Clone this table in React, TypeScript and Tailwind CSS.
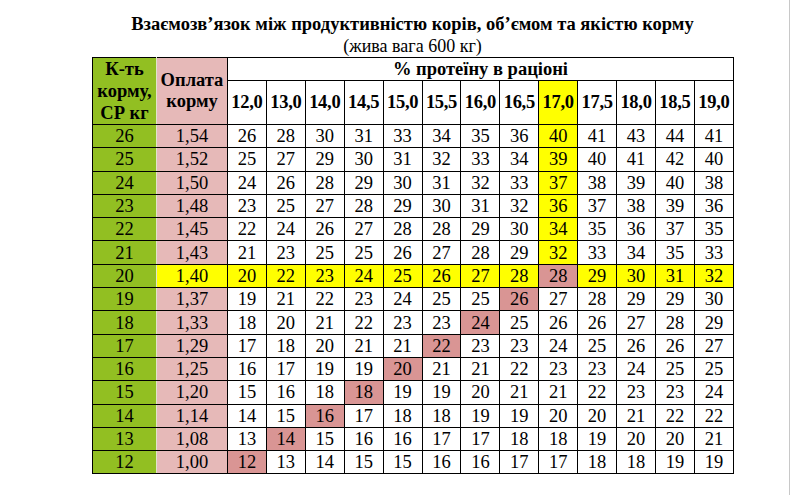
const proteins = ["12,0", "13,0", "14,0", "14,5", "15,0", "15,5", "16,0", "16,5", "17,0", "17,5", "18,0", "18,5", "19,0"];

// [к-ть корму, оплата корму, значення по колонках]
const rows: [string, string, number[]][] = [
  ["26", "1,54", [26, 28, 30, 31, 33, 34, 35, 36, 40, 41, 43, 44, 41]],
  ["25", "1,52", [25, 27, 29, 30, 31, 32, 33, 34, 39, 40, 41, 42, 40]],
  ["24", "1,50", [24, 26, 28, 29, 30, 31, 32, 33, 37, 38, 39, 40, 38]],
  ["23", "1,48", [23, 25, 27, 28, 29, 30, 31, 32, 36, 37, 38, 39, 36]],
  ["22", "1,45", [22, 24, 26, 27, 28, 28, 29, 30, 34, 35, 36, 37, 35]],
  ["21", "1,43", [21, 23, 25, 25, 26, 27, 28, 29, 32, 33, 34, 35, 33]],
  ["20", "1,40", [20, 22, 23, 24, 25, 26, 27, 28, 28, 29, 30, 31, 32]],
  ["19", "1,37", [19, 21, 22, 23, 24, 25, 25, 26, 27, 28, 29, 29, 30]],
  ["18", "1,33", [18, 20, 21, 22, 23, 23, 24, 25, 26, 26, 27, 28, 29]],
  ["17", "1,29", [17, 18, 20, 21, 21, 22, 23, 23, 24, 25, 26, 26, 27]],
  ["16", "1,25", [16, 17, 19, 19, 20, 21, 21, 22, 23, 23, 24, 25, 25]],
  ["15", "1,20", [15, 16, 18, 18, 19, 19, 20, 21, 21, 22, 23, 23, 24]],
  ["14", "1,14", [14, 15, 16, 17, 18, 18, 19, 19, 20, 20, 21, 22, 22]],
  ["13", "1,08", [13, 14, 15, 16, 16, 17, 17, 18, 18, 19, 20, 20, 21]],
  ["12", "1,00", [12, 13, 14, 15, 15, 16, 16, 17, 17, 18, 18, 19, 19]],
];

const YELLOW_COL = 8;
const YELLOW_ROW = 6;

// діагональ "оптимуму" — темно-рожеві клітинки
function isMarked(r: number, c: number) {
  return r >= YELLOW_ROW && c === 14 - r;
}

function cellBg(r: number, c: number) {
  if (isMarked(r, c)) return "bg-[#d99594]";
  if (r === YELLOW_ROW) return "bg-[#ffff00]";
  if (c === YELLOW_COL && r < YELLOW_ROW) return "bg-[#ffff00]";
  return "bg-white";
}

export default function App() {
  return (
    <div className="relative h-[495px] w-[791px] overflow-hidden bg-white font-['Liberation_Serif','Times_New_Roman',serif] text-black">
      <div className="absolute inset-y-0 left-[789px] w-px bg-[#c8c8c8]" />
      <div className="ml-[92px] w-[641px] pt-[13px]">
        <div className="whitespace-nowrap text-center text-[18.5px] font-bold leading-[22px]">
          Взаємозв’язок між продуктивністю корів, об’ємом та якістю корму
        </div>
        <div className="text-center text-[18px] leading-[22px]">(жива вага 600 кг)</div>

        <table className="w-[641px] table-fixed border-collapse text-[18.5px]">
          <colgroup>
            <col className="w-[64px]" />
            <col className="w-[71px]" />
            {proteins.map((p) => (
              <col key={p} className="w-[38.92px]" />
            ))}
          </colgroup>
          <thead>
            <tr className="h-[23px]">
              <th
                rowSpan={2}
                className="border border-black border-r-[#dfe6c8] bg-[#92bf22] p-0 align-middle text-[18.5px] font-bold leading-[22px]"
              >
                К-ть
                <br />
                корму,
                <br />
                СР кг
              </th>
              <th
                rowSpan={2}
                className="border border-black border-l-[#dfe6c8] bg-[#e6b9b8] p-0 align-middle text-[18.5px] font-bold leading-[21px]"
              >
                Оплата
                <br />
                корму
              </th>
              <th colSpan={13} className="border border-black p-0 text-center font-bold leading-[22px]">
                % протеїну в раціоні
              </th>
            </tr>
            <tr className="h-[43px]">
              {proteins.map((p, i) => (
                <th
                  key={p}
                  className={`border border-black p-0 text-center font-bold tracking-[-0.3px] ${
                    i === YELLOW_COL ? "bg-[#ffff00]" : "bg-white"
                  }`}
                >
                  {p}
                </th>
              ))}
            </tr>
          </thead>
          <tbody>
            {rows.map(([qty, pay, vals], r) => (
              <tr key={qty} className="h-[23.3px] leading-[22px]">
                <td className="border border-black border-r-[#dfe6c8] bg-[#92bf22] p-0 text-center">{qty}</td>
                <td
                  className={`border border-black border-l-[#dfe6c8] p-0 text-center ${
                    r === YELLOW_ROW ? "bg-[#ffff00]" : "bg-[#e6b9b8]"
                  }`}
                >
                  {pay}
                </td>
                {vals.map((v, c) => (
                  <td key={c} className={`border border-black p-0 text-center ${cellBg(r, c)}`}>
                    {v}
                  </td>
                ))}
              </tr>
            ))}
          </tbody>
        </table>
      </div>
    </div>
  );
}
